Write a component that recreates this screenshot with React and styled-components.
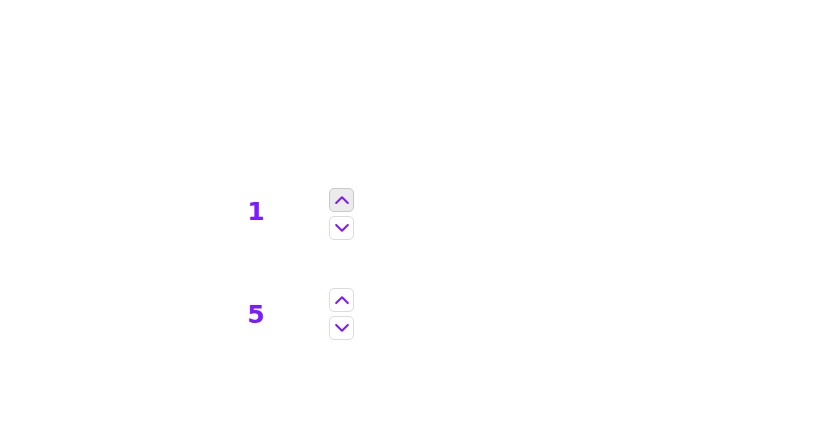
import React from "react";
import styled, { createGlobalStyle } from "styled-components";

const Global = createGlobalStyle`
  html, body { margin: 0; padding: 0; background: #ffffff; }
  body { font-family: "DejaVu Sans", "Inter", sans-serif; }
`;

const Page = styled.main`
  width: 826px;
  height: 434px;
  box-sizing: border-box;
  padding: 188px 0 0 226px;
  display: flex;
  flex-direction: column;
  gap: 48px;
  background: #ffffff;
`;

const Row = styled.div`
  display: flex;
  align-items: center;
  gap: 43px;
`;

const Value = styled.div`
  width: 60px;
  text-align: center;
  font-size: 25px;
  font-weight: 700;
  color: #7a1cff;
  line-height: 1;
  transform: translateY(${(p) => p.$dy || 0}px);
`;

const Stepper = styled.div`
  display: flex;
  flex-direction: column;
  gap: 4px;
`;

const StepButton = styled.button`
  width: 25px;
  height: 24px;
  padding: 0;
  margin: 0;
  box-sizing: border-box;
  border: 1px solid ${(p) => (p.$active ? "#c9c9c9" : "#dcdcdc")};
  border-radius: 5px;
  background: ${(p) => (p.$active ? "#ebebeb" : "#ffffff")};
  display: flex;
  align-items: center;
  justify-content: center;
  cursor: pointer;
`;

const Chevron = ({ up }) => (
  <svg width="14" height="8" viewBox="0 0 14 8" fill="none">
    <path
      d={up ? "M1.2 7 L7 1.3 L12.8 7" : "M1.2 1 L7 6.7 L12.8 1"}
      stroke="#7a1cff"
      strokeWidth="2"
      strokeLinecap="round"
      strokeLinejoin="round"
    />
  </svg>
);

const Counter = ({ value, activeUp, dy }) => (
  <Row>
    <Value $dy={dy}>{value}</Value>
    <Stepper>
      <StepButton $active={activeUp} aria-label="increase">
        <Chevron up />
      </StepButton>
      <StepButton aria-label="decrease">
        <Chevron />
      </StepButton>
    </Stepper>
  </Row>
);

export default function App() {
  return (
    <>
      <Global />
      <Page>
        <Counter value={1} activeUp dy={-3} />
        <Counter value={5} dy={0} />
      </Page>
    </>
  );
}
